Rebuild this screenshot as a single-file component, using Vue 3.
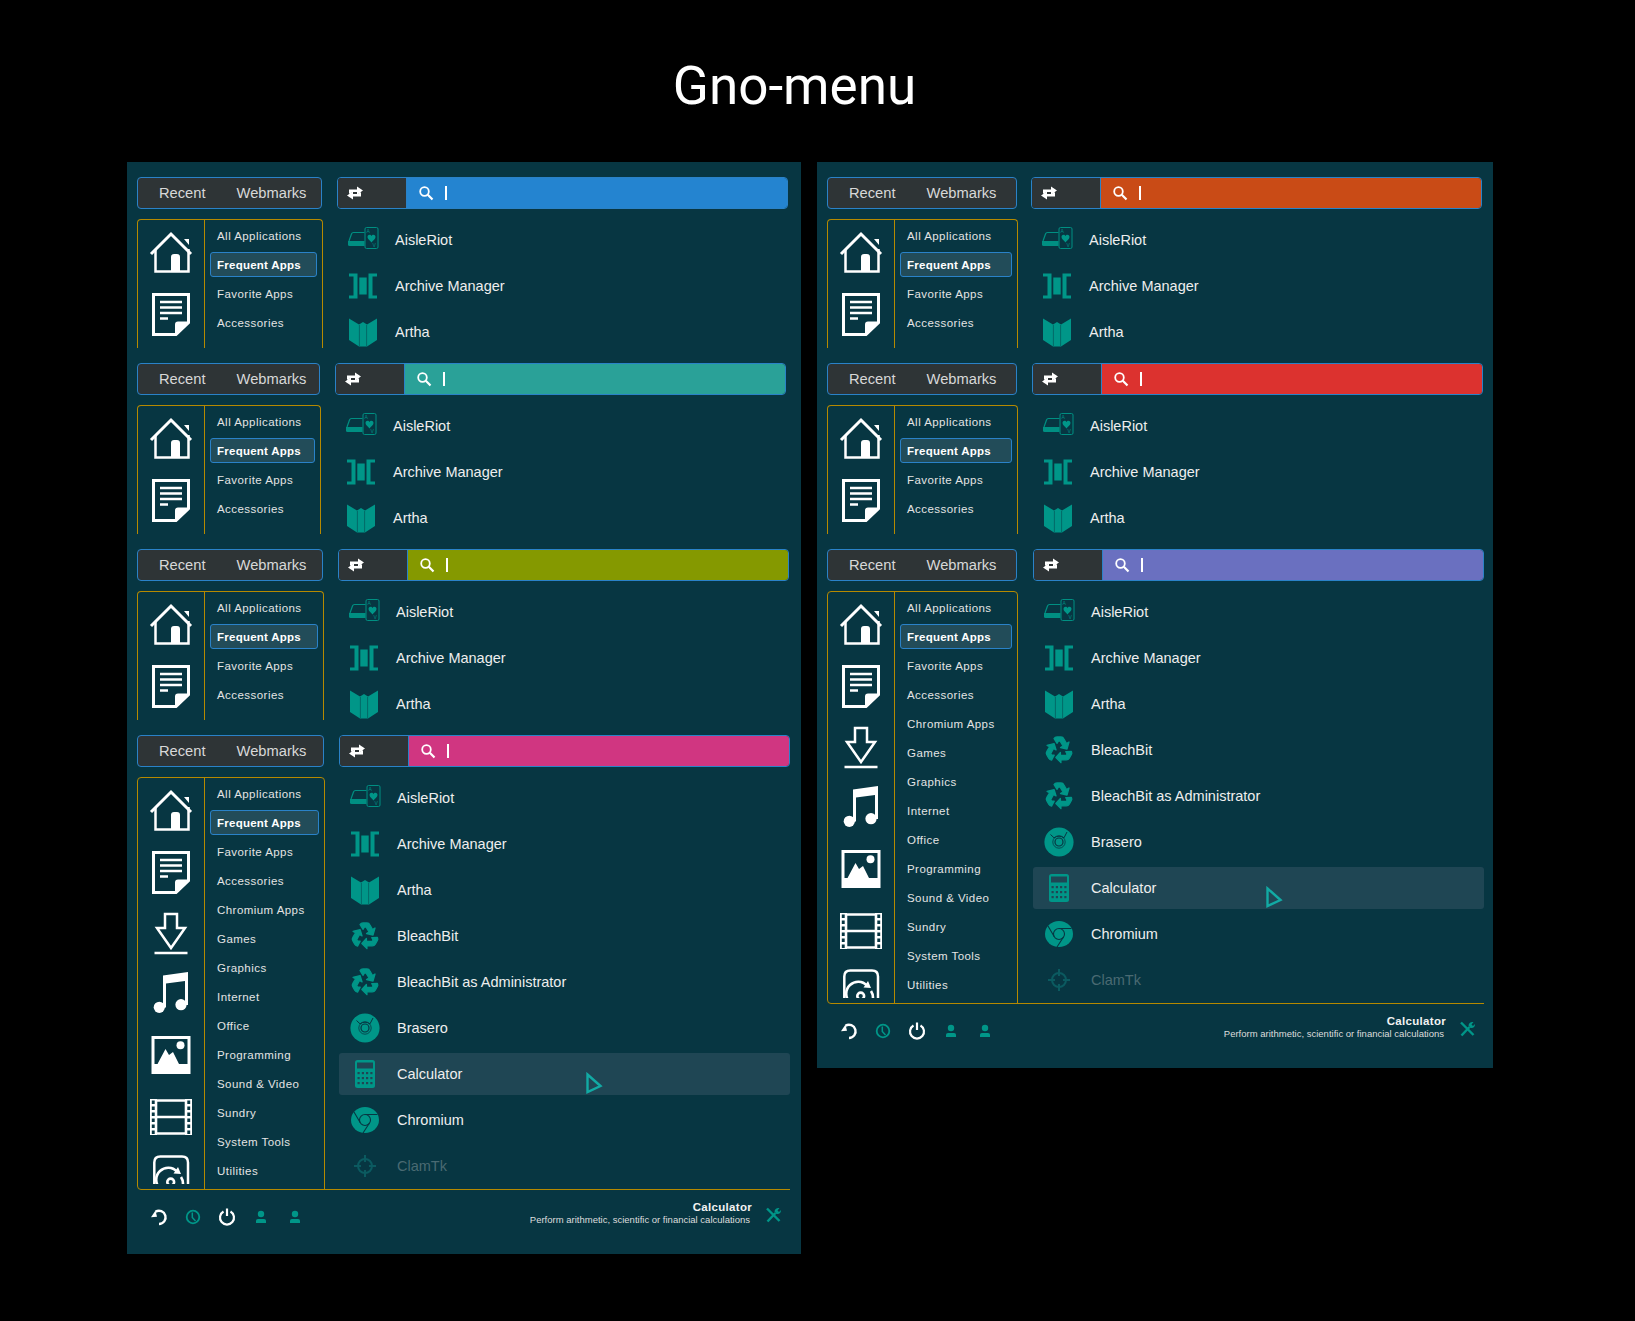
<script setup>
const cats = ['All Applications', 'Frequent Apps', 'Favorite Apps', 'Accessories', 'Chromium Apps', 'Games', 'Graphics', 'Internet', 'Office', 'Programming', 'Sound & Video', 'Sundry', 'System Tools', 'Utilities']
const places = ['home', 'doc', 'download', 'music', 'image', 'film', 'dial']
const apps = [
  { name: 'AisleRiot', icon: 'cards' },
  { name: 'Archive Manager', icon: 'archive' },
  { name: 'Artha', icon: 'book' },
  { name: 'BleachBit', icon: 'recycle' },
  { name: 'BleachBit as Administrator', icon: 'recycle' },
  { name: 'Brasero', icon: 'disc' },
  { name: 'Calculator', icon: 'calc', hover: true },
  { name: 'Chromium', icon: 'chrome' },
  { name: 'ClamTk', icon: 'target', dim: true },
]

// left: width of header column, gap: space before search, right: search width
const panels = [
  {
    id: 'a',
    width: 674,
    cursor: 247,
    menus: [
      { color: '#2484d0', left: 185, gap: 15, right: 451 },
      { color: '#2aa198', left: 183, gap: 15, right: 451 },
      { color: '#859900', left: 186, gap: 15, right: 451 },
      { color: '#d03681', left: 187, gap: 15, right: 451, full: true },
    ],
  },
  {
    id: 'b',
    width: 676,
    cursor: 233,
    menus: [
      { color: '#c94b16', left: 190, gap: 14, right: 451 },
      { color: '#dc322f', left: 190, gap: 15, right: 451 },
      { color: '#6a70c0', left: 190, gap: 16, right: 451, full: true },
    ],
  },
]

const gridOf = (m) => ({
  gridTemplateColumns: `${m.left}px ${m.right}px`,
  columnGap: `${m.gap}px`,
})
const catsOf = (m) => (m.full ? cats : cats.slice(0, 4))
const placesOf = (m) => (m.full ? places : places.slice(0, 2))
const appsOf = (m) => (m.full ? apps : apps.slice(0, 3))
</script>

<template>
  <div class="page">
    <svg class="sprite" aria-hidden="true">
      <symbol id="home" viewBox="0 0 48 48">
        <g transform="translate(0 1)">
          <path d="M4 26 24 6 44 26" fill="none" stroke="#fff" stroke-width="3" />
          <path d="M8.5 21V43.5H41.5V21" fill="none" stroke="#fff" stroke-width="2.5" />
          <path d="M24 44V29q0-3 3-3h3q3 0 3 3V44Z M37 11h5v6z" fill="#fff" />
        </g>
      </symbol>
      <symbol id="doc" viewBox="0 0 48 48">
        <g transform="translate(0 1.500)">
          <path d="M6.500 4H41.500V32L29 44H6.500Z" fill="none" stroke="#fff" stroke-width="3" />
          <path d="M42 31 28 45V34q0-3 3-3Z" fill="#fff" />
          <path d="M13 11.500H35M13 17H35M13 22.500H35M13 28H21" stroke="#fff" stroke-width="2.600" />
        </g>
      </symbol>
      <symbol id="download" viewBox="0 0 48 48">
        <g transform="translate(0 3)">
          <path d="M18 3H30V17H38L24 37 10 17H18Z" fill="none" stroke="#fff" stroke-width="2.500" />
          <path d="M7.500 42H40.500" stroke="#fff" stroke-width="2.500" />
        </g>
      </symbol>
      <symbol id="music" viewBox="0 0 48 48">
        <g transform="translate(0 -2)">
          <path d="M16 7.500 41 4V37H38V13L19 15.500V39.500H16Z" fill="#fff" />
          <circle cx="12.300" cy="39.300" r="5.600" fill="#fff" />
          <circle cx="34" cy="36.700" r="5.600" fill="#fff" />
        </g>
      </symbol>
      <symbol id="image" viewBox="0 0 48 48">
        <path d="M6 6.500H42V41.500H6Z" fill="none" stroke="#fff" stroke-width="3" />
        <path d="M6 33H42V42H6Z M10.500 33 18.500 18 22 24 26 21 32 33Z" fill="#fff" />
        <circle cx="33.500" cy="14.300" r="4" fill="#fff" />
      </symbol>
      <symbol id="film" viewBox="0 0 48 48">
        <path d="M3 6H10V42H3Z M38 6H45V42H38Z" fill="#fff" />
        <path d="M6.500 7.500V41M41.500 7.500V41" stroke="#073642" stroke-width="3.400" stroke-dasharray="3.400 2.600" />
        <path d="M9 7.500H39V40.500H9ZM9 24H39" fill="none" stroke="#fff" stroke-width="2.600" />
      </symbol>
      <symbol id="dial" viewBox="0 0 48 48">
        <path d="M7.300 50V7.500q0-6 6-6H35q6 0 6 6V50" fill="none" stroke="#fff" stroke-width="2.500" />
        <circle cx="23.700" cy="27" r="3.400" fill="none" stroke="#fff" stroke-width="2.600" />
        <path d="M12.500 33A12 12 0 0 1 30 16.500M34 22A12 12 0 0 1 35 33" fill="none" stroke="#fff" stroke-width="2.600" />
        <path d="M31 12 34 19 26.500 18.500Z" fill="#fff" />
      </symbol>

      <symbol id="cards" viewBox="0 0 32 32">
        <rect x="18" y="3.500" width="13" height="21" rx="1.500" fill="none" stroke="#008f82" />
        <path d="M24.500 12c-1-2-4-1.300-4 1 0 2 2.500 3.500 4 5.500 1.500-2 4-3.500 4-5.500 0-2.300-3-3-4-1Z" fill="#009688" />
        <path d="M17.500 8.500H6.500Q5 8.500 4.500 10L2 17" fill="none" stroke="#008f82" stroke-width="1.200" />
        <path d="M1 17H17.500V22H2.500Q1 22 1 20.500Z" fill="#008f82" />
      </symbol>
      <symbol id="archive" viewBox="0 0 32 32">
        <path d="M2 3.500H10.500V28.500H2V25.500H6.500V6.500H2Z M30 3.500H21.500V28.500H30V25.500H25.500V6.500H30Z M12.300 7.500H19.700V24.500H12.300Z" fill="#009688" />
      </symbol>
      <symbol id="book" viewBox="0 0 32 32">
        <path d="M2 2.500 12 8.500 16 6 20 8.500 30 2.500V24L20 30.500H12L2 24Z" fill="#009688" />
        <path d="M12.400 9V30M19.600 9V30" stroke="#073642" stroke-width=".7" opacity=".65" />
      </symbol>
      <symbol id="recycle" viewBox="0 0 32 32">
        <g fill="#009688" stroke="#009688" stroke-width="1.300" stroke-linejoin="round">
          <path d="M11 4.500Q12 3 14 3H18Q20 3 21 5L23.500 9.500 26 8 24 15 17.500 13.500 20 12 17 7H15.500L14 9.300Z" />
          <path transform="rotate(120 16 16)" d="M11 4.500Q12 3 14 3H18Q20 3 21 5L23.500 9.500 26 8 24 15 17.500 13.500 20 12 17 7H15.500L14 9.300Z" />
          <path transform="rotate(240 16 16)" d="M11 4.500Q12 3 14 3H18Q20 3 21 5L23.500 9.500 26 8 24 15 17.500 13.500 20 12 17 7H15.500L14 9.300Z" />
        </g>
      </symbol>
      <symbol id="disc" viewBox="0 0 32 32">
        <circle cx="16" cy="16" r="14.600" fill="#009688" />
        <path d="M7.500 8.500 11 11.800Q16 8.500 21 11.800L24 6" fill="none" stroke="#073642" stroke-width="1" />
        <circle cx="16" cy="16" r="6.200" fill="none" stroke="#073642" stroke-width=".8" />
        <circle cx="16" cy="16" r="4" fill="none" stroke="#073642" stroke-width="1.200" />
      </symbol>
      <symbol id="calc" viewBox="0 0 32 32">
        <rect x="6" y="2" width="20" height="28" rx="2.500" fill="#009688" />
        <rect x="8" y="4.500" width="16" height="6" fill="#1f4654" />
        <g fill="#1f4654">
          <rect x="8.500" y="14" width="2.200" height="2.200" /><rect x="12.800" y="14" width="2.200" height="2.200" /><rect x="17" y="14" width="2.200" height="2.200" /><rect x="21.300" y="14" width="2.200" height="2.200" />
          <rect x="8.500" y="19" width="2.200" height="2.200" /><rect x="12.800" y="19" width="2.200" height="2.200" /><rect x="17" y="19" width="2.200" height="2.200" /><rect x="21.300" y="19" width="2.200" height="2.200" />
          <rect x="8.500" y="24" width="2.200" height="2.200" /><rect x="12.800" y="24" width="2.200" height="2.200" /><rect x="17" y="24" width="2.200" height="2.200" /><rect x="21.300" y="24" width="2.200" height="2.200" />
        </g>
      </symbol>
      <symbol id="chrome" viewBox="0 0 32 32">
        <ellipse cx="16" cy="16" rx="14" ry="13" fill="#009688" />
        <circle cx="16" cy="16" r="5.500" fill="none" stroke="#073642" stroke-width="1.100" />
        <path d="M16 10.500H28.500M11.300 18.800 5 8M20.500 19 14 29" stroke="#073642" stroke-width="1.100" />
      </symbol>
      <symbol id="target" viewBox="0 0 32 32">
        <g fill="none" stroke="#0b5a60" stroke-width="2">
          <circle cx="16" cy="16" r="7" />
          <path d="M16 5V12M16 20V27M5 16H12M20 16H27" />
        </g>
      </symbol>

      <symbol id="swap" viewBox="0 0 18 14">
        <path d="M3 7.500V3.500H11V.5L17 4.500 11 8.500V6H5.500V7.500ZM15 6.500V10.500H7V13.500L1 9.500 7 5.500V8H12.500V6.500Z" fill="#fff" />
      </symbol>
      <symbol id="search" viewBox="0 0 16 16">
        <circle cx="6.500" cy="6.500" r="4.300" fill="none" stroke="#fff" stroke-width="1.800" />
        <path d="M9.800 9.800 14.500 14.500" stroke="#fff" stroke-width="2.200" />
      </symbol>
      <symbol id="undo" viewBox="0 0 18 18">
        <path d="M5.500 3.800A6.600 6.600 0 1 1 9 16" fill="none" stroke="#fff" stroke-width="2.400" />
        <path d="M1 9.200 7 8.800 5.500 2.500Z" fill="#fff" />
      </symbol>
      <symbol id="clock" viewBox="0 0 18 18">
        <circle cx="9" cy="9" r="6.300" fill="none" stroke="#009688" stroke-width="1.800" />
        <path d="M8.300 4.500V9.500L11.500 13" fill="none" stroke="#009688" stroke-width="1.500" />
      </symbol>
      <symbol id="power" viewBox="0 0 18 18">
        <path d="M5.500 3.500A7 7 0 1 0 12.500 3.500" fill="none" stroke="#fff" stroke-width="2.200" />
        <path d="M9 .5V8" stroke="#fff" stroke-width="2.200" />
      </symbol>
      <symbol id="user" viewBox="0 0 18 18">
        <circle cx="9" cy="6" r="3.200" fill="#009688" />
        <path d="M4 15V12.500Q4 11 6 11H12Q14 11 14 12.500V15Z" fill="#009688" />
      </symbol>
      <symbol id="tools" viewBox="0 0 18 18">
        <path d="M3 2.500 15.500 15" stroke="#009688" stroke-width="2.400" />
        <path d="M3.500 15.500 11.500 7" stroke="#009688" stroke-width="2.400" />
        <path d="M10.500 5.500Q11 1.500 15.500 2L13.500 4.500 15 6 17 4Q17 8.500 12.500 8Z" fill="#009688" />
      </symbol>
    </svg>

    <h1 class="title">Gno-menu</h1>

    <div class="panels">
      <section v-for="p in panels" :key="p.id" class="panel" :style="{ width: p.width + 'px' }">
        <div v-for="m in p.menus" :key="m.color" class="menu" :class="{ full: m.full }" :style="gridOf(m)">
          <div class="tabs">
            <span>Recent</span>
            <span>Webmarks</span>
          </div>
          <div class="search">
            <div class="switch"><svg class="swap"><use href="#swap" /></svg></div>
            <div class="field" :style="{ background: m.color }">
              <svg class="glass"><use href="#search" /></svg>
              <i class="caret"></i>
            </div>
          </div>

          <div class="side">
            <div class="places">
              <div class="places-in">
                <svg v-for="s in placesOf(m)" :key="s" class="place"><use :href="'#' + s" /></svg>
              </div>
            </div>
            <ul class="cats">
              <li v-for="c in catsOf(m)" :key="c" class="cat" :class="{ on: c === 'Frequent Apps' }">{{ c }}</li>
            </ul>
          </div>

          <ul class="apps">
            <li v-for="a in appsOf(m)" :key="a.name" class="app" :class="{ hover: a.hover, dim: a.dim }">
              <svg class="app-icon" viewBox="0 0 32 32">
                <use :href="'#' + a.icon" />
                <template v-if="a.icon === 'cards'">
                  <text x="19.500" y="9" class="pip">A</text>
                  <text x="25.500" y="23" class="pip">V</text>
                </template>
              </svg>
              <span class="app-name">{{ a.name }}</span>
              <svg v-if="a.hover" class="pointer" :style="{ left: p.cursor + 'px' }" viewBox="0 0 17 23">
                <path d="M1.500 2.500 14.500 14 1.500 20Z" fill="none" stroke="#12aaa4" stroke-width="2.400" />
              </svg>
            </li>
          </ul>

          <footer v-if="m.full" class="foot">
            <svg class="act"><use href="#undo" /></svg>
            <svg class="act"><use href="#clock" /></svg>
            <svg class="act"><use href="#power" /></svg>
            <svg class="act"><use href="#user" /></svg>
            <svg class="act"><use href="#user" /></svg>
            <div class="about">
              <strong>Calculator</strong>
              <small>Perform arithmetic, scientific or financial calculations</small>
            </div>
            <svg class="act tool"><use href="#tools" /></svg>
          </footer>
        </div>
      </section>
    </div>
  </div>
</template>

<style>
html,
body {
  margin: 0;
  background: #000;
}
</style>

<style scoped>
.page {
  width: 1635px;
  height: 1321px;
  background: #000;
  font-family: "Liberation Sans", Arial, sans-serif;
  color: #eee;
  overflow: hidden;
}

.sprite {
  position: absolute;
  width: 0;
  height: 0;
}

.pip {
  font-size: 5px;
  fill: #008f82;
  font-family: "Liberation Sans", sans-serif;
}

.title {
  width: 1589px;
  height: 162px;
  margin: 0;
  padding-top: 53px;
  box-sizing: border-box;
  text-align: center;
  font: 400 53px/66px Roboto, sans-serif;
  color: #fff;
}

.panels {
  display: flex;
  align-items: flex-start;
  gap: 16px;
  padding-left: 127px;
}

.panel {
  background: #073642;
  padding: 15px 0 0 10px;
  box-sizing: border-box;
}

.menu {
  display: grid;
  grid-template-rows: 32px 129px;
  row-gap: 10px;
  margin-bottom: 15px;
}

.menu.full {
  grid-template-rows: 32px 413px 54px;
  margin-bottom: 0;
}

.tabs {
  display: flex;
  align-items: center;
  gap: 31px;
  padding: 0 0 1px 21px;
  background: #2e3436;
  border: 1px solid #2a82c8;
  border-radius: 4px;
  font-size: 14.700px;
  color: #d8d8d8;
}

.search {
  display: flex;
  border: 1px solid #2a82c8;
  border-radius: 4px;
  overflow: hidden;
}

.switch {
  width: 69px;
  flex: none;
  display: flex;
  align-items: center;
  background: #2e3436;
  border-right: 1px solid #2a82c8;
  box-sizing: border-box;
}

.swap {
  width: 18px;
  height: 14px;
  margin-left: 8px;
}

.field {
  flex: 1;
  display: flex;
  align-items: center;
}

.glass {
  width: 16px;
  height: 16px;
  margin-left: 11px;
}

.caret {
  width: 2px;
  height: 14px;
  margin-left: 11px;
  background: #fff;
}

.side {
  display: flex;
  margin-right: -1px;
  border: 1px solid #b58900;
  border-bottom: 0;
  border-radius: 4px 4px 0 0;
  overflow: hidden;
}

.full .side {
  border-bottom: 1px solid #b58900;
  border-radius: 4px 4px 0 4px;
}

.places {
  width: 67px;
  flex: none;
  padding: 7px 0 5px;
  border-right: 1px solid #b58900;
  box-sizing: border-box;
}

.places-in {
  height: 100%;
  overflow: hidden;
  display: flex;
  flex-direction: column;
  align-items: center;
  gap: 13.600px;
}

.place {
  width: 48px;
  height: 48px;
  flex: none;
}

.cats {
  list-style: none;
  margin: 0;
  padding: 3px 0 0;
  flex: 1;
  min-width: 0;
}

.cat {
  height: 25px;
  margin: 0 5px 4px;
  padding-left: 6px;
  display: flex;
  align-items: center;
  border: 1px solid transparent;
  border-radius: 3px;
  box-sizing: border-box;
  font-size: 11.500px;
  letter-spacing: .45px;
  white-space: nowrap;
  color: #e4e4e4;
}

.cat.on {
  background: #224c59;
  border-color: #2a82c8;
  font-weight: 700;
  letter-spacing: .25px;
  color: #fff;
}

.apps {
  list-style: none;
  margin: 0;
  padding: 0;
  display: flex;
  flex-direction: column;
  gap: 4px;
}

.app {
  position: relative;
  height: 42px;
  flex: none;
  display: flex;
  align-items: center;
  gap: 16px;
  padding-left: 10px;
  border-radius: 3px;
  font-size: 14.500px;
  color: #eee;
}

.app-name {
  padding-bottom: 1px;
}

.app.hover {
  background: #1f4654;
}

.app.dim {
  color: #4a6a72;
}

.app-icon {
  width: 32px;
  height: 32px;
  flex: none;
}

.pointer {
  position: absolute;
  top: 19px;
  width: 17px;
  height: 23px;
}

.foot {
  position: relative;
  grid-column: 1 / -1;
  margin-top: -11px;
  display: flex;
  align-items: flex-start;
  gap: 16px;
  padding: 19px 8px 0 13px;
}

/* gold rule that joins the sidebar box and the app list */
.foot::before {
  content: "";
  position: absolute;
  top: 0;
  left: 4px;
  right: 0;
  height: 1px;
  background: #b58900;
}

.act {
  width: 18px;
  height: 18px;
  flex: none;
}

.about {
  margin: -8px 0 0 auto;
  display: flex;
  flex-direction: column;
  align-items: flex-end;
}

.about strong {
  font-size: 11.500px;
  line-height: 14px;
  letter-spacing: .3px;
  color: #f2f2f2;
}

.about small {
  font-size: 9.500px;
  line-height: 12px;
  padding-right: 2px;
  color: #ddd;
}

.tool {
  margin: -2px 0 0 -4px;
}
</style>
